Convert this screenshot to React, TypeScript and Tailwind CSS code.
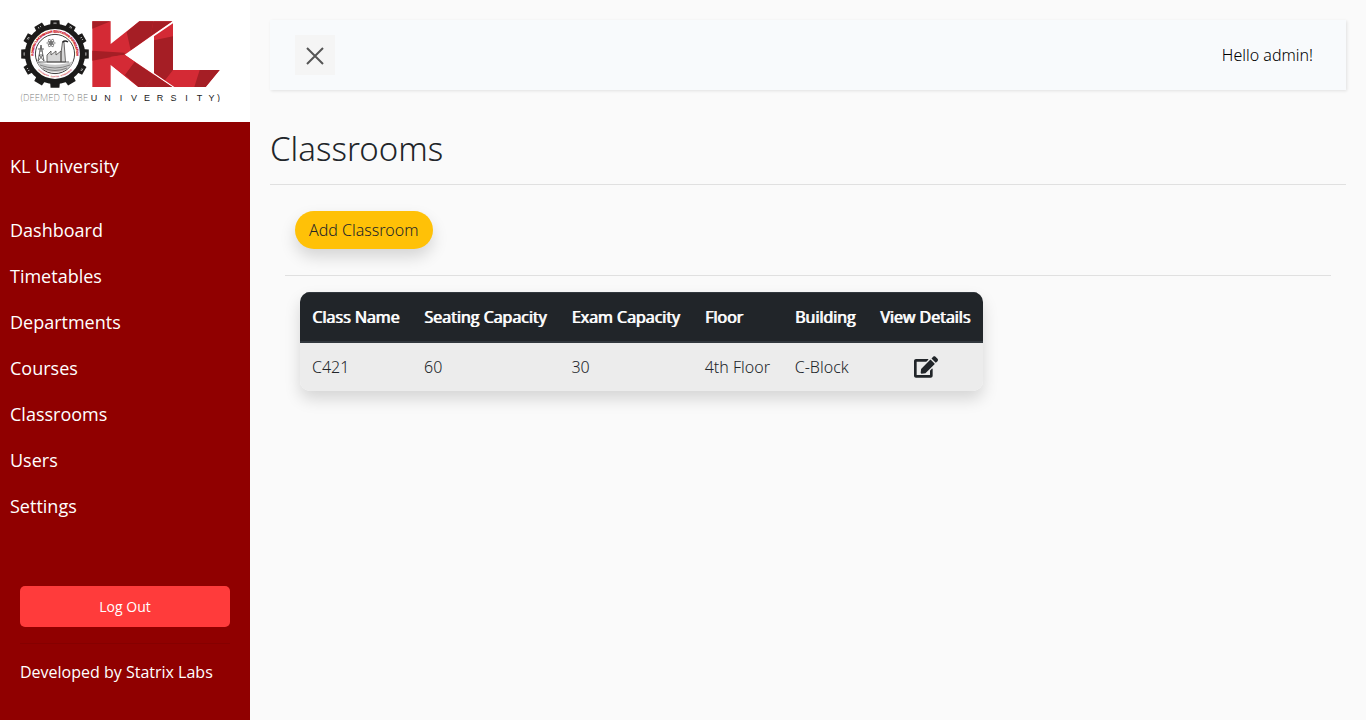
import React from "react";

const links = ["Dashboard", "Timetables", "Departments", "Courses", "Classrooms", "Users", "Settings"];
const columns = ["Class Name", "Seating Capacity", "Exam Capacity", "Floor", "Building"];
const rooms = [["C421", "60", "30", "4th Floor", "C-Block"]];
const teeth = [0, 30, 60, 90, 120, 150, 180, 210, 240, 270, 300, 330];
const glyphs = ["M-1-31.5v2.5h2v-2.5M0-31.5v2.5", "M-1.2-31.5h2.2v2.4h-2.2M-1-30.3h1.6", "M-1-31.8v2.6h2.2M1.2-31.8v1.6"];

function Logo() {
  return (
    <svg viewBox="0 0 200 82" className="block w-[200px]" role="img" aria-label="KL University logo">
      <defs>
        <path id="sealTop" d="M14.8 41.3A21.5 21.5 0 1 1 55.2 41.3" />
        <path id="sealBottom" d="M14.8 45.6A23.3 23.3 0 0 0 55.2 45.6" />
      </defs>
      <g transform="translate(35 34)">
        {teeth.map((a, i) => (
          <g key={a} transform={`rotate(${a})`}>
            <path d="M-5-27L-4.4-33.8H4.4L5-27Z" fill="#1c1b1a" />
            {(a < 130 || a > 230) && (
              <path d={glyphs[i % 3]} fill="none" stroke="#d8d8d8" strokeWidth=".7" />
            )}
          </g>
        ))}
        <circle r="27.5" fill="#fff" stroke="#1c1b1a" strokeWidth="5.2" />
        <circle r="19.6" fill="#fff" stroke="#2c2a2a" strokeWidth=".9" />
        <path d="M-18 7C-8 12 8 12 18 7C14 22-14 22-18 7Z" fill="#c9c9c9" />
        <path d="M-15 11Q0 17 15 11M-12 14Q0 19 12 14" stroke="#666" strokeWidth=".7" fill="none" />
        <path d="M-8 8V1L-4-3V1L1-3V1L6-3V8Z M6 8V-1L7.5-12H9L10.5 8Z" fill="#d6d6d6" stroke="#4b4948" strokeWidth=".8" />
        <path d="M7.5-12Q10-14 13-12" stroke="#222" strokeWidth="1.4" fill="none" />
        <path d="M-17 7L-14-9L-11 7M-16 1H-12M-15.5-3H-12.5M-17-5H-11M-17 7L-12 1M-11 7L-16 1M-17 8H14" stroke="#444" strokeWidth=".8" fill="none" />
        <g fill="none" stroke="#555" strokeWidth=".6" transform="translate(-4 -11)">
          <ellipse rx="4.3" ry="1.5" />
          <ellipse rx="4.3" ry="1.5" transform="rotate(60)" />
          <ellipse rx="4.3" ry="1.5" transform="rotate(120)" />
          <circle r=".8" fill="#333" />
        </g>
      </g>
      <text fill="#cf2a36" stroke="#cf2a36" strokeWidth=".3" fontSize="2.9" fontWeight="700" fontFamily="Liberation Sans, sans-serif">
        <textPath href="#sealTop" startOffset="50%" textAnchor="middle">KONERU LAKSHMAIAH EDUCATION FOUNDATION</textPath>
      </text>
      <text fill="#cf2a36" fontSize="2" fontWeight="700" fontFamily="Liberation Sans, sans-serif">
        <textPath href="#sealBottom" startOffset="50%" textAnchor="middle">VIJAYAWADA · GUNTUR · HYDERABAD</textPath>
      </text>
      <g transform="translate(65 -10) scale(.33333)">
        <path fill="#d42a35" d="M22 34H77V102L163 34H262L119 134L262 231H160L77 164V231H22Z" />
        <path fill="#a51e25" d="M22 34H77L22 56ZM22 122L119 128V134L96 138L22 152ZM163 34H205L197 78L137 121L125 66ZM148 155L119 195L160 231H181L207 195Z" />
        <path fill="#a51e25" d="M205 34H262L197 78ZM181 231L207 194L262 231Z" />
        <path fill="#d42a35" d="M160 231L77 164V140L119 134L149 155L119 195Z" />
        <path fill="#d42a35" d="M207 79L264 40V180H404L362 231H268L207 189Z" />
        <path fill="#a51e25" d="M207 91L264 79V180L207 188ZM344 180H404L362 231H328ZM207 188L264 180L240 211Z" />
      </g>
      <text x="0" y="81" fill="#777" fontSize="9" fontWeight="200" fontFamily="Inter, sans-serif">(DEEMED TO BE</text>
      <g fill="#222" fontSize="9" fontFamily="Liberation Sans, sans-serif">
        {"UNIVERSITY)".split("").map((c, i) => (
          <text key={i} textAnchor="middle" x={[74, 87.5, 101, 114, 127, 140, 153.5, 166.5, 179.5, 191.5, 198.5][i]} y="81">
            {c}
          </text>
        ))}
      </g>
    </svg>
  );
}

export default function App() {
  return (
    <div className="flex min-h-screen bg-[#fafafa] font-['Open_Sans',sans-serif] text-base text-[#212529]">
      <aside className="w-[250px] shrink-0 bg-[#900000] text-white">
        <div className="bg-white p-5">
          <Logo />
        </div>
        <nav className="pt-[21px] text-lg leading-[26px]">
          <p className="p-[10px] pb-7">
            <a href="#home">KL University</a>
          </p>
          <ul>
            {links.map((l) => (
              <li key={l}>
                <a href={"#" + l.toLowerCase()} className="block p-[10px]">
                  {l}
                </a>
              </li>
            ))}
          </ul>
        </nav>
        <div className="px-5 pt-[57px]">
          <button type="button" className="h-[41px] w-full rounded-[5px] bg-[#ff3b3b] text-sm">
            Log Out
          </button>
          <hr className="my-4 border-[#850000]" />
          <p>Developed by Statrix Labs</p>
        </div>
      </aside>
      <main className="min-w-0 flex-1 p-5 font-['Noto_Sans',sans-serif] font-light">
        <header className="mb-10 flex items-center justify-between bg-[#f8fafc] py-[15px] pr-[33px] pl-[25px] shadow-[1px_1px_3px_rgba(0,0,0,0.1)]">
          <button type="button" aria-label="Toggle sidebar" className="flex size-10 items-center justify-center bg-[#f5f5f5]">
            <svg viewBox="0 0 40 40" className="size-10" fill="none" stroke="#555" strokeWidth="2">
              <path d="M12 13L28 29M28 13L12 29" />
            </svg>
          </button>
          <span className="text-black">Hello admin!</span>
        </header>
        <h2 className="text-[33px] leading-[38px]">Classrooms</h2>
        <hr className="mt-4 mb-[26px] border-[#e0e0e0]" />
        <div className="px-[15px]">
          <button type="button" className="ml-[10px] h-[38px] rounded-full bg-[#ffc107] px-[14px] shadow-[0_8px_16px_rgba(0,0,0,0.15)]">
            Add Classroom
          </button>
          <hr className="mt-[26px] mb-4 border-[#e0e0e0]" />
          <div className="ml-[15px] w-fit overflow-hidden rounded-[10px] shadow-[0_8px_16px_rgba(0,0,0,0.15)]">
            <table className="min-w-[683px] border-separate border-spacing-0 bg-[#ececec] text-left">
              <thead className="bg-[#212529] font-['Open_Sans',sans-serif] text-white">
                <tr>
                  {[...columns, "View Details"].map((c) => (
                    <th key={c} scope="col" className="border-t border-b-2 border-t-[#32383e] border-b-[#32383e] p-3 font-normal [text-shadow:1px_0_0_currentColor]">
                      {c}
                    </th>
                  ))}
                </tr>
              </thead>
              <tbody>
                {rooms.map((r) => (
                  <tr key={r[0]}>
                    {r.map((v, i) => (
                      <td key={i} className="p-3">
                        {v}
                      </td>
                    ))}
                    <td className="px-3">
                      <a href="#edit" aria-label="Edit classroom" className="flex justify-center">
                        <svg viewBox="0 0 576 512" className="h-[22px] w-6" fill="currentColor">
                          <path d="M402.6 83.2l90.2 90.2c3.8 3.8 3.8 10 0 13.8L274.4 405.6l-92.8 10.3c-12.4 1.4-22.9-9.1-21.5-21.5l10.3-92.8L388.8 83.2c3.8-3.8 10-3.8 13.8 0zm162-22.9l-48.8-48.8c-15.2-15.2-39.9-15.2-55.2 0l-35.4 35.4c-3.8 3.8-3.8 10 0 13.8l90.2 90.2c3.8 3.8 10 3.8 13.8 0l35.4-35.4c15.2-15.3 15.2-40 0-55.2zM384 346.2V448H64V128h229.8c3.2 0 6.2-1.3 8.5-3.5l40-40c7.6-7.6 2.2-20.5-8.5-20.5H48C21.5 64 0 85.5 0 112v352c0 26.5 21.5 48 48 48h352c26.5 0 48-21.5 48-48V306.2c0-10.7-12.9-16-20.5-8.5l-40 40c-2.2 2.3-3.5 5.3-3.5 8.5z" />
                        </svg>
                      </a>
                    </td>
                  </tr>
                ))}
              </tbody>
            </table>
          </div>
        </div>
      </main>
    </div>
  );
}
